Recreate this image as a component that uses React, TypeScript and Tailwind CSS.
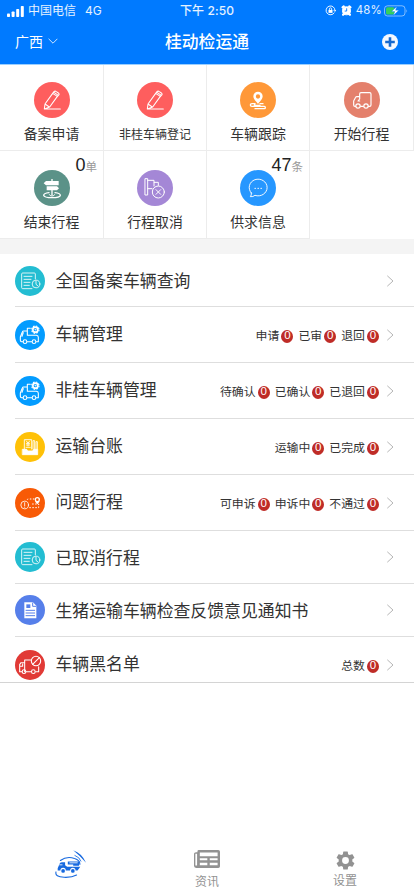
import React from "react";

type IconName =
  | "pencil" | "pin" | "truck" | "sign" | "flag" | "chat"
  | "record" | "manage" | "ledger" | "problem" | "notice" | "blacklist";

const SHAPES: Record<IconName, React.ReactNode> = {
  pencil: (
    <g strokeWidth="3.2">
      <path d="M31 81 L33 66 L56 34 L70 43 L47 75 Z M33 66 L46 75 M56 34 L60 29 Q63 26 67 29 L73 33 Q77 36 74 39 L70 44 M60 31 L73 40 M31 81 H79" />
    </g>
  ),
  pin: (
    <g>
      <path fill="#fff" stroke="none" fillRule="evenodd" d="M54 29 A14 14 0 0 1 68 43 C68 52 58 60 54 66 C50 60 40 52 40 43 A14 14 0 0 1 54 29 Z M54 37 A6.5 6.5 0 1 0 54 50 A6.5 6.5 0 1 0 54 37 Z" />
      <path strokeWidth="4" d="M45 65 H36 Q31 65 31 69 Q31 73 36 73 H73 Q76 73 76 77 Q76 80 73 80 H45 M45 65 L43 70 H60 M60 65 H69" />
    </g>
  ),
  truck: (
    <g strokeWidth="3.5">
      <path d="M35 73 H33 Q29 73 29 69 V57 L35 46 Q36 44 39 44 H47 V36 Q47 32 51 32 H77 Q81 32 81 36 V69 Q81 73 77 73 H73 M50 73 H58 M47 44 V51 L42 57 H47" />
      <circle cx="42" cy="72" r="6.5" />
      <circle cx="66" cy="72" r="6.5" />
    </g>
  ),
  sign: (
    <g>
      <path fill="#fff" stroke="none" d="M52 27 H56 V33 H74 V46 H36 L29 39.5 L36 33 H52 Z M38 49 H69 L75 55 L69 61 H56 V76 H52 V61 H38 Z" />
      <path strokeWidth="4" d="M45 68 Q29 70 29 76 Q31 83 54 83 Q78 83 79 76 Q79 70 63 68" />
      <path strokeWidth="3" d="M46 74 Q47 78 54 78 Q61 78 62 74" />
    </g>
  ),
  flag: (
    <g strokeWidth="3">
      <path d="M25 26 H32 V75 H25 Z M32 31 H51 V37 H64 V46 M32 56 H45 M51 37 V48" />
      <circle cx="64" cy="66" r="18" />
      <path d="M57 59 L71 73 M71 59 L57 73" />
    </g>
  ),
  chat: (
    <g strokeWidth="2.8">
      <path d="M34 69 A27 25 0 1 1 45 76 Q39 81 31 80 Q35 76 34 69 Z" />
      <path strokeWidth="3.4" d="M45 55 H46 M54 55 H55 M63 55 H64" />
    </g>
  ),
  record: (
    <g strokeWidth="2.8" opacity=".9">
      <path d="M61 39 V24 Q61 21 58 21 H23 Q20 21 20 24 V65 Q20 68 23 68 H51 M27 31 H51 M27 40 H48 M27 49 H45 M27 58 H43" />
      <circle cx="63" cy="54" r="11.5" />
      <path d="M63 46 V55 L69 60" />
    </g>
  ),
  manage: (
    <g strokeWidth="3.2">
      <path d="M24 65 H20 Q16 65 16 61 V51 L22 36 Q23 33 26 33 H37 V25 H46 M37 33 V46 H64 Q70 47 70 52 V65 H64 M37 65 H50 M25 38 L21 49" />
      <circle cx="30" cy="65" r="5.5" />
      <circle cx="57" cy="65" r="5.5" />
      <circle cx="61" cy="29" r="7.5" strokeWidth="5" />
      <circle cx="61" cy="29" r="11" strokeWidth="3.5" strokeDasharray="5 3.64" strokeLinecap="butt" />
      <circle cx="61" cy="29" r="1.5" strokeWidth="2" />
    </g>
  ),
  ledger: (
    <g strokeWidth="2.6">
      <path d="M28 51 V23 H50 V51 M34 27 L39 33 L44 27 M39 33 V42 M34 34 H44 M34 39 H44 M33 46 H46 M54 51 V26 H59 V51 M63 51 V29 H67 V51" />
      <path fill="#fff" d="M23 52 H35 L38 57 H53 L56 52 H68 V68 H23 Z" />
    </g>
  ),
  problem: (
    <g strokeWidth="2.5">
      <circle cx="29" cy="51" r="11.5" />
      <path d="M29 44 V53 M29 57 V58" />
      <path strokeWidth="3" strokeDasharray="4.5 4.5" strokeLinecap="butt" d="M58 33 H41 Q35 33 37 38 M43 59 H71 V48 H47" />
      <path fill="#fff" stroke="none" fillRule="evenodd" d="M67 27 A8 8 0 0 1 75 35 Q75 41 67 49 Q59 41 59 35 A8 8 0 0 1 67 27 Z M67 31 A4 4 0 1 0 67 39 A4 4 0 1 0 67 31 Z" />
    </g>
  ),
  notice: (
    <g>
      <path fill="#fff" stroke="none" d="M28 22 H54 L64 32 V70 H28 Z" />
      <path stroke="#567fea" strokeWidth="3" d="M33 46 H59 M33 54 H59 M33 62 H59 M53 24 V34 H62" />
      <path fill="#567fea" stroke="none" d="M34 28 H46 V39 H34 Z" />
    </g>
  ),
  blacklist: (
    <g strokeWidth="3.2">
      <path d="M21 65 H14 V44 L18 38 H29 V65 M29 38 V30 H47 M33 65 H49 M62 65 H71 V50 M14 49 H23 V42" />
      <circle cx="27" cy="65" r="5.5" />
      <circle cx="55" cy="65" r="5.5" />
      <circle cx="63" cy="33" r="14" />
      <path d="M53 43 L73 23" />
    </g>
  ),
};

function RoundIcon({ name, color, big = false }: { name: IconName; color: string; big?: boolean }) {
  const side = big ? 108 : 90;
  return (
    <svg
      viewBox={`0 0 ${side} ${side}`}
      className={big ? "size-9 shrink-0" : "size-[30px] shrink-0"}
      fill="none"
      stroke="#fff"
      strokeLinecap="round"
      strokeLinejoin="round"
    >
      <circle cx={side / 2} cy={side / 2} r={side / 2} fill={color} stroke="none" />
      {SHAPES[name]}
    </svg>
  );
}

type Tile = { label: string; icon: IconName; color: string; count?: string; unit?: string; small?: boolean };

const TILES: Tile[] = [
  { label: "备案申请", icon: "pencil", color: "#fe5e5e" },
  { label: "非桂车辆登记", icon: "pencil", color: "#fe5e5e", small: true },
  { label: "车辆跟踪", icon: "pin", color: "#ff9838" },
  { label: "开始行程", icon: "truck", color: "#e4806c" },
  { label: "结束行程", icon: "sign", color: "#5b9288", count: "0", unit: "单" },
  { label: "行程取消", icon: "flag", color: "#a487d6" },
  { label: "供求信息", icon: "chat", color: "#2697ff", count: "47", unit: "条" },
];

function TileCell({ tile, first }: { tile: Tile; first: boolean }) {
  return (
    <div
      className={`relative flex flex-col items-center border-r border-[#ececec] ${
        first ? "h-[86px] border-b pt-[17px]" : "h-[88px] border-b pt-[19px]"
      }`}
    >
      <RoundIcon name={tile.icon} color={tile.color} big />
      <span
        className={`whitespace-nowrap text-[#333] ${
          tile.small ? "mt-[7px] text-[12px] leading-5" : "mt-[6px] text-[13.9px] leading-5"
        }`}
      >
        {tile.label}
      </span>
      {tile.count && (
        <div className="absolute right-[6px] top-[3px] flex items-baseline leading-[22px]">
          <span className="font-['Liberation_Sans',sans-serif] text-[18px] text-[#222]">{tile.count}</span>
          <span className="text-[11.5px] text-[#999]">{tile.unit}</span>
        </div>
      )}
    </div>
  );
}

type Row = { label: string; icon: IconName; color: string; height: string; stats?: string[] };

const ROWS: Row[] = [
  { label: "全国备案车辆查询", icon: "record", color: "#23bdd2", height: "h-[52px]" },
  { label: "车辆管理", icon: "manage", color: "#039cff", height: "h-14", stats: ["申请", "已审", "退回"] },
  { label: "非桂车辆管理", icon: "manage", color: "#039cff", height: "h-14", stats: ["待确认", "已确认", "已退回"] },
  { label: "运输台账", icon: "ledger", color: "#ffc107", height: "h-14", stats: ["运输中", "已完成"] },
  { label: "问题行程", icon: "problem", color: "#f85a06", height: "h-14", stats: ["可申诉", "申诉中", "不通过"] },
  { label: "已取消行程", icon: "record", color: "#23bdd2", height: "h-[53px]" },
  { label: "生猪运输车辆检查反馈意见通知书", icon: "notice", color: "#567fea", height: "h-[53px]" },
  { label: "车辆黑名单", icon: "blacklist", color: "#e13a36", height: "h-[56px]", stats: ["总数"] },
];

function ListRow({ row }: { row: Row }) {
  return (
    <div className={`ml-[15px] flex shrink-0 items-center border-b border-[#dedede] pr-[20px] ${row.height}`}>
      <RoundIcon name={row.icon} color={row.color} />
      <span
        className={`ml-[10.5px] flex-1 whitespace-nowrap text-[16.87px] leading-6 text-[#333] ${
          row.stats ? "pb-px" : "pt-px"
        }`}
      >
        {row.label}
      </span>
      <div className="flex items-center gap-[5px] pt-[3px]">
        {row.stats?.map((s) => (
          <span key={s} className="flex items-center gap-[2px] text-[11.9px] leading-4 text-[#333]">
            <span className="whitespace-nowrap">{s}</span>
            <span className="flex h-[13px] w-3 items-center justify-center rounded-[50%] bg-[#bf2c27] font-['Liberation_Sans',sans-serif] text-[11.5px] leading-none text-white">
              0
            </span>
          </span>
        ))}
      </div>
      <svg viewBox="0 0 8 12" className="ml-[7px] h-3 w-2" fill="none" stroke="#b5b5b5" strokeWidth="1">
        <path d="M1.3 .8 L7 6 L1.3 11.2" />
      </svg>
    </div>
  );
}

function StatusBar() {
  return (
    <div className="grid h-[22px] grid-cols-[1fr_auto_1fr] items-center text-[12px] text-white/90">
      <div className="flex items-center pl-[7px]">
        <svg viewBox="0 0 17 11" className="h-[11px] w-[17px]" fill="#fff">
          <rect x="0" y="7.5" width="3" height="3.5" rx=".8" />
          <rect x="4.6" y="5.5" width="3" height="5.5" rx=".8" />
          <rect x="9.2" y="3" width="3" height="8" rx=".8" />
          <rect x="13.8" y="0" width="3" height="11" rx=".8" />
        </svg>
        <span className="ml-1">中国电信</span>
        <span className="ml-[9px] text-[12px]">4G</span>
      </div>
      <div className="font-medium tracking-[0.1px]">下午 2:50</div>
      <div className="flex items-center justify-end pr-[6px]">
        <svg viewBox="0 0 12 12" className="size-[11px]" fill="none" stroke="#fff">
          <path d="M10.2 8.2 A4.8 4.8 0 1 1 10.8 6 M9.4 5.4 L10.8 7 L12 5.4" />
          <rect x="3.8" y="5.4" width="4.4" height="3.2" fill="#fff" stroke="none" />
          <path strokeWidth=".9" d="M4.8 5.5 V4.3 A1.2 1.2 0 0 1 7.2 4.3 V5.5" />
        </svg>
        <svg viewBox="0 0 12 12" className="ml-[5px] size-[11px]" fill="#fff" stroke="#fff">
          <circle cx="6" cy="6.3" r="4.4" />
          <path strokeWidth="2.4" strokeLinecap="round" d="M1.7 2.5 L3 1.5 M10.3 2.5 L9 1.5 M2.3 10.6 L3.5 9.6 M9.7 10.6 L8.5 9.6" />
          <path stroke="#007aff" strokeWidth="1" fill="none" d="M6.2 3.6 V6.6 H4" />
        </svg>
        <span className="ml-[4px] text-[11.4px] tracking-[0.2px]">48%</span>
        <svg viewBox="0 0 24 12" className="ml-[2px] h-3 w-6" fill="none">
          <rect x=".5" y=".8" width="20.5" height="10.2" rx="3" stroke="#fff" strokeOpacity=".5" />
          <rect x="2" y="2.2" width="8.5" height="7.4" rx="1.6" fill="#35d05c" />
          <path d="M22.4 4.2 Q24 6 22.4 7.8 Z" fill="#fff" fillOpacity=".5" />
          <path d="M12.8 1.4 L7.6 6.6 H10.8 L9.4 10.6 L14.8 5.2 H11.6 Z" fill="#fff" stroke="#007aff" strokeWidth=".4" />
        </svg>
      </div>
    </div>
  );
}

function TabBar() {
  return (
    <nav className="mt-auto grid h-[49px] grid-cols-3 text-[12px] text-[#929292]">
      <div className="flex justify-center pl-[3px] pt-[3px]">
        <svg viewBox="0 0 92 86" className="h-[29px] w-[31px]" fill="none" stroke="#1769df" strokeLinecap="round">
          <path fill="#1769df" stroke="none" d="M54 1 Q80 10 92 38 Q74 17 54 1 Z" />
          <path fill="#1769df" stroke="none" d="M8 54 L14 40 Q16 36 21 36 H30 V45 L36 50 H75 L67 61 H61 A8 8 0 0 0 45 61 H32 A8 8 0 0 0 16 61 H8 Z M38 34 H74 L71 47 H54 V43 H38 Z" />
          <circle cx="24" cy="62" r="5.5" fill="#1769df" stroke="none" />
          <circle cx="53" cy="62" r="5.5" fill="#1769df" stroke="none" />
          <path strokeWidth="3.2" d="M16 31 Q35 17 58 25 Q74 30 74 42 M3 65 Q-1 80 27 81 Q50 82 64 74" />
          <path strokeWidth="2.5" d="M59 16 Q74 22 77 33" />
          <path stroke="#fff" strokeWidth="2.5" d="M14 44 H21 M44 38 H66" />
        </svg>
      </div>
      <div className="flex flex-col items-center pt-[3px]">
        <svg viewBox="0 0 76 52" className="h-[18px] w-[26px]">
          <path
            fill="#929292"
            fillRule="evenodd"
            d="M14 0 H71 Q76 0 76 5 V47 Q76 52 71 52 H6 Q0 52 0 46 V11 Q0 6 6 6 H10 V4 Q10 0 14 0 Z M4 11 V45 H9 V11 Z M17 7 V18 H69 V7 Z M17 24 V30 H39 V24 Z M46 24 V30 H69 V24 Z M17 37 V44 H39 V37 Z M46 37 V44 H69 V37 Z"
          />
        </svg>
        <span className="mt-[5px] leading-[18px]">资讯</span>
      </div>
      <div className="flex flex-col items-center pt-[4px]">
        <svg viewBox="2 2 20 20" className="size-[19px]" fill="#929292">
          <path d="M19.14 12.94c.04-.3.06-.61.06-.94s-.02-.64-.07-.94l2.03-1.58a.5.5 0 0 0 .12-.61l-1.92-3.32a.49.49 0 0 0-.59-.22l-2.39.96a7 7 0 0 0-1.62-.94L14.4 2.81a.48.48 0 0 0-.48-.41h-3.84a.48.48 0 0 0-.47.41l-.36 2.54a7 7 0 0 0-1.62.94l-2.39-.96a.49.49 0 0 0-.59.22L2.73 8.87a.48.48 0 0 0 .12.61l2.03 1.58a6 6 0 0 0 0 1.88l-2.03 1.58a.5.5 0 0 0-.12.61l1.92 3.32c.12.22.37.29.59.22l2.39-.96c.5.38 1.03.7 1.62.94l.36 2.54c.05.24.24.41.48.41h3.84c.24 0 .44-.17.47-.41l.36-2.54a7 7 0 0 0 1.62-.94l2.39.96c.22.08.47 0 .59-.22l1.92-3.32a.48.48 0 0 0-.12-.61zM12 15.6a3.6 3.6 0 1 1 0-7.2 3.6 3.6 0 0 1 0 7.2z" />
        </svg>
        <span className="mt-[2px] leading-[18px]">设置</span>
      </div>
    </nav>
  );
}

export default function App() {
  return (
    <div className="flex h-[896px] w-[414px] flex-col overflow-hidden bg-white font-['Inter','Noto_Sans_CJK_SC',sans-serif]">
      <header className="h-[65px] shrink-0 border-b border-[#9acfff] bg-[#007aff] text-white">
        <StatusBar />
        <div className="grid h-[42px] grid-cols-[1fr_auto_1fr] items-center">
          <div className="flex items-center pb-[4px] pl-[15px] text-[14px]">
            广西
            <svg viewBox="0 0 10 6" className="ml-[5px] h-[6px] w-[10px]" fill="none" stroke="#fff" strokeOpacity=".8">
              <path d="M.6 .8 L5 5.2 L9.4 .8" />
            </svg>
          </div>
          <h1 className="text-[16.8px] font-medium">桂动检运通</h1>
          <svg viewBox="0 0 16 16" className="mb-[2px] mr-[16px] size-4 justify-self-end">
            <circle cx="8" cy="8" r="8" fill="#f4f8ff" />
            <path d="M8 3.2 V12.8 M3.2 8 H12.8" stroke="#1769cf" strokeWidth="2.6" />
          </svg>
        </div>
      </header>

      <section className="grid shrink-0 grid-cols-[104px_103px_103px_104px]">
        {TILES.map((t, i) => (
          <TileCell key={t.label} tile={t} first={i < 4} />
        ))}
      </section>
      <div className="h-[15px] shrink-0 bg-[#f4f4f4]" />

      <section className="flex h-[429px] shrink-0 flex-col overflow-hidden border-b border-[#d4d4d4] pt-px">
        {ROWS.map((r) => (
          <ListRow key={r.label} row={r} />
        ))}
      </section>

      <TabBar />
    </div>
  );
}
